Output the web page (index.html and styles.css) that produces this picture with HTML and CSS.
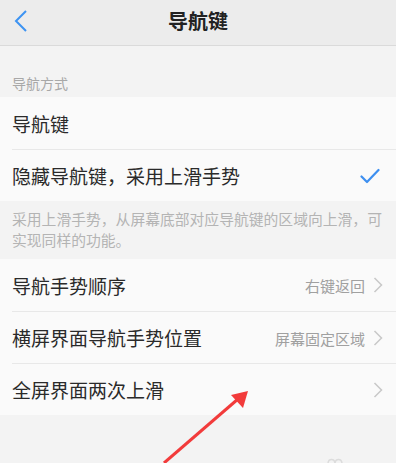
FILE: index.html
```html
<!DOCTYPE html>
<html lang="zh-CN">
<head>
  <meta charset="UTF-8">
  <meta name="viewport" content="width=device-width, initial-scale=1.0">
  <title>导航键</title>
  <link rel="stylesheet" href="styles.css">
</head>
<body>
  <div class="header">
    <svg class="back" width="14" height="22" viewBox="0 0 14 22">
      <path d="M12 1 L2 11 L12 21" fill="none" stroke="#3d93f2" stroke-width="2"/>
    </svg>
    <div class="title">导航键</div>
  </div>

  <div class="section-label">导航方式</div>
  <div class="group">
    <div class="row">
      <span class="row-text">导航键</span>
    </div>
    <div class="row">
      <span class="row-text">隐藏导航键，采用上滑手势</span>
      <svg class="check" width="20" height="16" viewBox="0 0 20 16">
        <path d="M1.5 8.5 L7 14 L18.5 2" fill="none" stroke="#3d8ff0" stroke-width="2.2" stroke-linecap="round" stroke-linejoin="round"/>
      </svg>
    </div>
  </div>
  <div class="desc">采用上滑手势，从屏幕底部对应导航键的区域向上滑，可实现同样的功能。</div>

  <div class="group">
    <div class="row">
      <span class="row-text">导航手势顺序</span>
      <span class="value">右键返回</span>
      <svg class="chev" width="10" height="16" viewBox="0 0 10 16"><path d="M1.5 1 L8.5 8 L1.5 15" fill="none" stroke="#c8c8c8" stroke-width="1.5"/></svg>
    </div>
    <div class="row">
      <span class="row-text">横屏界面导航手势位置</span>
      <span class="value">屏幕固定区域</span>
      <svg class="chev" width="10" height="16" viewBox="0 0 10 16"><path d="M1.5 1 L8.5 8 L1.5 15" fill="none" stroke="#c8c8c8" stroke-width="1.5"/></svg>
    </div>
    <div class="row">
      <span class="row-text">全屏界面两次上滑</span>
      <span class="value"></span>
      <svg class="chev" width="10" height="16" viewBox="0 0 10 16"><path d="M1.5 1 L8.5 8 L1.5 15" fill="none" stroke="#c8c8c8" stroke-width="1.5"/></svg>
    </div>
  </div>

  <!-- 标注箭头 -->
  <svg class="arrow" width="396" height="463" viewBox="0 0 396 463">
    <path d="M164 463 L238 399" stroke="#f23b3b" stroke-width="3" fill="none"/>
    <path d="M248 391 L231 395 L243 408 Z" fill="#f23b3b"/>
  </svg>
  <svg class="mark" width="18" height="8" viewBox="0 0 18 8">
    <path d="M1 8 C1 2 8 2 8 8 M8 8 C8 2 15 2 15 8" fill="none" stroke="#dcdcdc" stroke-width="1.5"/>
  </svg>
</body>
</html>
```

FILE: styles.css
```css
body {
  margin: 0;
  width: 396px;
  height: 463px;
  overflow: hidden;
  background: #f3f3f3;
  font-family: "Noto Sans CJK SC", "Noto Sans", sans-serif;
  color: #2a2a2a;
  position: relative;
}
.header {
  height: 45px;
  background: #ececec;
  border-bottom: 1px solid #dadada;
  display: flex;
  align-items: center;
  justify-content: center;
  position: relative;
}
.back {
  position: absolute;
  left: 14px;
  top: 10px;
}
.title {
  font-size: 20px;
  font-weight: bold;
  color: #222;
  margin-top: -4px;
}
.section-label {
  height: 51px;
  box-sizing: border-box;
  padding: 27px 0 0 12px;
  font-size: 14px;
  line-height: 20px;
  color: #a8a8a8;
}
.group {
  background: #fafafa;
}
.row {
  height: 52px;
  margin-left: 12px;
  padding-right: 13px;
  display: flex;
  align-items: center;
  border-top: 1px solid #e8e8e8;
  box-sizing: border-box;
}
.row:first-child {
  border-top: none;
}
.row-text {
  flex: 1;
  font-size: 19px;
  line-height: 24px;
  margin-top: 1px;
}
.check {
  margin-right: 3px;
}
.value {
  font-size: 15px;
  color: #a0a0a0;
  margin-right: 8px;
  margin-top: 1px;
}
.desc {
  height: 58px;
  box-sizing: border-box;
  padding: 7px 12px 0;
  font-size: 14.8px;
  line-height: 21px;
  color: #b4b4b4;
}
.arrow {
  position: absolute;
  left: 0;
  top: 0;
}
.mark {
  position: absolute;
  left: 327px;
  top: 456px;
}
```
